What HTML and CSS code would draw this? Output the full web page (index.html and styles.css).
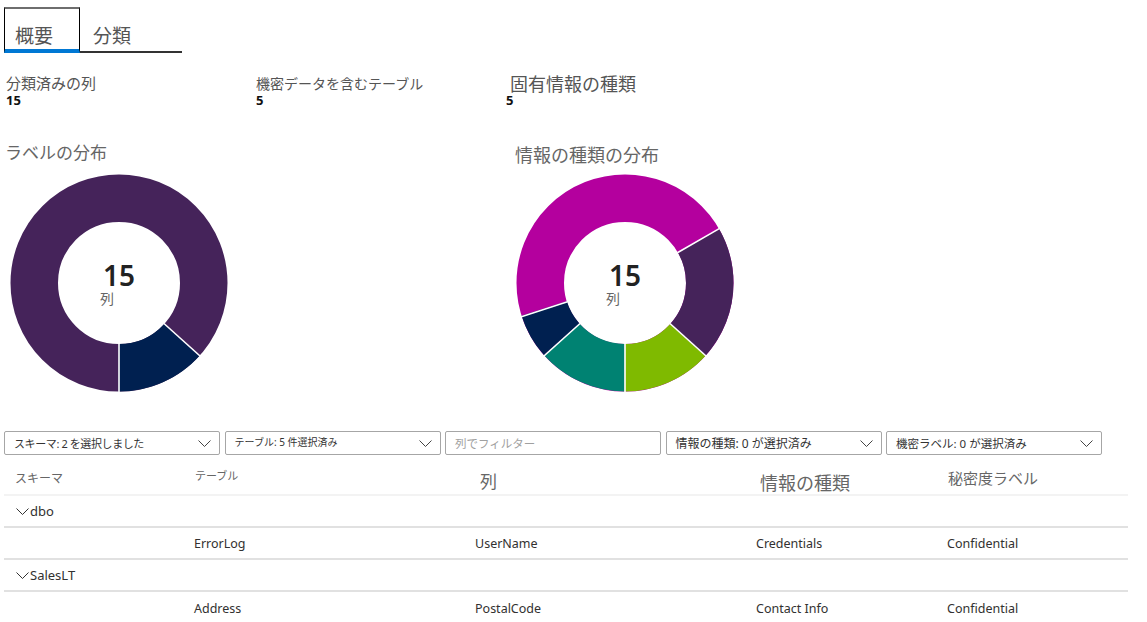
FILE: index.html
```html
<!DOCTYPE html>
<html lang="ja">
<head>
<meta charset="utf-8">
<title>データの分類</title>
<link rel="stylesheet" href="styles.css">
</head>
<body>
<div class="page">
  <nav class="tabs">
    <div class="tab tab-active">概要</div>
    <div class="tab tab-plain">分類</div>
  </nav>

  <section class="stats">
    <div class="stat">
      <div class="stat-title stat-title-a">分類済みの列</div>
      <div class="stat-value">15</div>
    </div>
    <div class="stat">
      <div class="stat-title stat-title-b">機密データを含むテーブル</div>
      <div class="stat-value">5</div>
    </div>
    <div class="stat">
      <div class="stat-title stat-title-lg">固有情報の種類</div>
      <div class="stat-value">5</div>
    </div>
  </section>

  <section class="charts">
    <div class="chart">
      <div class="chart-title chart-title-a">ラベルの分布</div>
      <div class="donut-wrap">
        <svg class="donut" width="218" height="218" viewBox="0 0 218 218">
          <circle cx="109" cy="109" r="84.75" fill="none" stroke="#45235a" stroke-width="47.5"/>
          <circle cx="109" cy="109" r="84.75" fill="none" stroke="#002050" stroke-width="47.5" stroke-dasharray="71 532.5" stroke-dashoffset="-195.25" transform="rotate(-90 109 109)"/>
          <g stroke="#ffffff" stroke-width="1.6">
            <line x1="153.96" y1="149.48" x2="190.59" y2="182.47"/>
            <line x1="109" y1="169.5" x2="109" y2="218.8"/>
          </g>
        </svg>
        <div class="donut-num">15</div>
        <div class="donut-unit">列</div>
      </div>
    </div>
    <div class="chart">
      <div class="chart-title chart-title-b">情報の種類の分布</div>
      <div class="donut-wrap">
        <svg class="donut" width="218" height="218" viewBox="0 0 218 218">
          <circle cx="109" cy="109" r="84.75" fill="none" stroke="#b4009e" stroke-width="47.5"/>
          <circle cx="109" cy="109" r="84.75" fill="none" stroke="#45235a" stroke-width="47.5" stroke-dasharray="106.5 532.5" stroke-dashoffset="-88.75" transform="rotate(-90 109 109)"/>
          <circle cx="109" cy="109" r="84.75" fill="none" stroke="#7fba00" stroke-width="47.5" stroke-dasharray="71 532.5" stroke-dashoffset="-195.25" transform="rotate(-90 109 109)"/>
          <circle cx="109" cy="109" r="84.75" fill="none" stroke="#008272" stroke-width="47.5" stroke-dasharray="71 532.5" stroke-dashoffset="-266.25" transform="rotate(-90 109 109)"/>
          <circle cx="109" cy="109" r="84.75" fill="none" stroke="#002050" stroke-width="47.5" stroke-dasharray="35.5 532.5" stroke-dashoffset="-337.25" transform="rotate(-90 109 109)"/>
          <g stroke="#ffffff" stroke-width="1.6">
            <line x1="161.39" y1="78.75" x2="204.09" y2="54.1"/>
            <line x1="153.96" y1="149.48" x2="190.59" y2="182.47"/>
            <line x1="109" y1="169.5" x2="109" y2="218.8"/>
            <line x1="64.04" y1="149.48" x2="27.41" y2="182.47"/>
            <line x1="51.46" y1="127.69" x2="4.57" y2="142.93"/>
          </g>
        </svg>
        <div class="donut-num">15</div>
        <div class="donut-unit">列</div>
      </div>
    </div>
  </section>

  <section class="filters">
    <div class="filter">
      <span class="filter-text fs-a">スキーマ: 2 を選択しました</span>
      <svg class="chev" width="13" height="7" viewBox="0 0 13 7"><polyline points="0.5,0.5 6.5,6.5 12.5,0.5" fill="none" stroke="#444" stroke-width="1"/></svg>
    </div>
    <div class="filter">
      <span class="filter-text fs-b">テーブル: 5 件選択済み</span>
      <svg class="chev" width="13" height="7" viewBox="0 0 13 7"><polyline points="0.5,0.5 6.5,6.5 12.5,0.5" fill="none" stroke="#444" stroke-width="1"/></svg>
    </div>
    <div class="filter">
      <span class="filter-text fs-c placeholder">列でフィルター</span>
    </div>
    <div class="filter">
      <span class="filter-text fs-d">情報の種類: 0 が選択済み</span>
      <svg class="chev" width="13" height="7" viewBox="0 0 13 7"><polyline points="0.5,0.5 6.5,6.5 12.5,0.5" fill="none" stroke="#444" stroke-width="1"/></svg>
    </div>
    <div class="filter">
      <span class="filter-text fs-e">機密ラベル: 0 が選択済み</span>
      <svg class="chev" width="13" height="7" viewBox="0 0 13 7"><polyline points="0.5,0.5 6.5,6.5 12.5,0.5" fill="none" stroke="#444" stroke-width="1"/></svg>
    </div>
  </section>

  <section class="grid">
    <div class="row row-head">
      <div class="hcell h-schema">スキーマ</div>
      <div class="hcell h-table">テーブル</div>
      <div class="hcell h-col">列</div>
      <div class="hcell h-type">情報の種類</div>
      <div class="hcell h-label">秘密度ラベル</div>
    </div>
    <div class="row row-group">
      <div class="gcell">
        <svg class="gchev" width="13" height="7" viewBox="0 0 13 7"><polyline points="0.5,0.5 6.5,6.5 12.5,0.5" fill="none" stroke="#333" stroke-width="1"/></svg>
        <span>dbo</span>
      </div>
    </div>
    <div class="row row-data">
      <div class="cell"></div>
      <div class="cell">ErrorLog</div>
      <div class="cell">UserName</div>
      <div class="cell">Credentials</div>
      <div class="cell">Confidential</div>
    </div>
    <div class="row row-group">
      <div class="gcell">
        <svg class="gchev" width="13" height="7" viewBox="0 0 13 7"><polyline points="0.5,0.5 6.5,6.5 12.5,0.5" fill="none" stroke="#333" stroke-width="1"/></svg>
        <span>SalesLT</span>
      </div>
    </div>
    <div class="row row-data row-last">
      <div class="cell"></div>
      <div class="cell">Address</div>
      <div class="cell">PostalCode</div>
      <div class="cell">Contact Info</div>
      <div class="cell">Confidential</div>
    </div>
  </section>
</div>
</body>
</html>
```

FILE: styles.css
```css
* {
  box-sizing: border-box;
}

html, body {
  margin: 0;
  padding: 0;
  background: #ffffff;
}

body {
  font-family: "Noto Sans", "Noto Sans CJK JP", sans-serif;
  color: #323130;
  overflow: hidden;
}

.page {
  width: 1147px;
}

/* Tabs */
.tabs {
  display: flex;
  margin: 7px 0 0 4px;
  height: 46px;
}

.tab {
  height: 46px;
  font-family: "Noto Sans CJK JP", sans-serif;
  font-size: 19px;
  line-height: 24px;
  padding-top: 14px;
  color: #555555;
  border-top: 2px solid transparent;
}

.tab-active {
  width: 76px;
  padding-left: 10px;
  padding-bottom: 2px;
  border-top: 2px solid #6e6e6e;
  border-left: 1px solid #000000;
  border-right: 1px solid #000000;
  border-bottom: 4px solid #0078d4;
}

.tab-plain {
  width: 102px;
  padding-left: 13px;
  padding-bottom: 4px;
  border-bottom: 2px solid #333333;
}

/* Stats */
.stats {
  display: grid;
  grid-template-columns: 250px 250px auto;
  margin-top: 20px;
  padding-left: 6px;
}

.stat-title {
  font-family: "Noto Sans CJK JP", sans-serif;
  line-height: 20px;
  height: 20px;
  color: #555555;
  white-space: nowrap;
}

.stat-title-a {
  font-size: 15px;
}

.stat-title-b {
  font-size: 14px;
}

.stat-title-lg {
  font-size: 18px;
  line-height: 17px;
  margin-left: 4px;
  padding-top: 2px;
}

.stat-value {
  font-size: 13px;
  line-height: 14px;
  font-weight: 700;
  color: #111111;
}

/* Charts */
.charts {
  display: grid;
  grid-template-columns: 506px auto;
  margin-top: 33px;
  padding-left: 4px;
}

.chart-title {
  font-family: "Noto Sans CJK JP", sans-serif;
  height: 24px;
  color: #666666;
  white-space: nowrap;
}

.chart-title-a {
  font-size: 17px;
  line-height: 24px;
  margin-left: 1px;
}

.chart-title-b {
  font-size: 18px;
  line-height: 22px;
  padding-top: 3px;
  margin-left: 5px;
}

.donut-wrap {
  position: relative;
  width: 218px;
  height: 218px;
  margin-top: 10px;
  margin-left: 6px;
}

.donut {
  display: block;
}

.donut-num {
  position: absolute;
  top: 90px;
  left: 0;
  right: 0;
  text-align: center;
  font-family: "Noto Sans", sans-serif;
  font-size: 28px;
  line-height: 22px;
  font-weight: 600;
  color: #222222;
}

.donut-unit {
  position: absolute;
  top: 117px;
  left: 90px;
  font-family: "Noto Sans CJK JP", sans-serif;
  font-size: 14px;
  line-height: 15px;
  color: #666666;
}

/* Filters */
.filters {
  display: grid;
  grid-template-columns: repeat(5, 216px);
  column-gap: 4.5px;
  margin-top: 39px;
  padding-left: 4px;
}

.filter {
  height: 24px;
  border: 1px solid #a6a6a6;
  border-radius: 2px;
  display: flex;
  align-items: center;
  justify-content: space-between;
  padding: 0 8px 0 9px;
}

.filter-text {
  font-family: "Noto Sans", "Noto Sans CJK JP", sans-serif;
  color: #333333;
  white-space: nowrap;
}

.fs-a { font-size: 11px; letter-spacing: -0.4px; }
.fs-b { font-size: 10px; margin-top: -4px; }
.fs-c { font-size: 11.5px; }
.fs-d { font-size: 12px; }
.fs-e { font-size: 11.5px; }

.placeholder {
  color: #a0a0a0;
}

.chev {
  display: block;
  margin-top: 1px;
}

/* Table */
.grid {
  margin-top: 4px;
  margin-left: 4px;
  width: 1124px;
}

.row {
  display: grid;
  grid-template-columns: 190px 281px 281px 191px 1fr;
  border-bottom: 2px solid #e1e1e1;
}

.row-head {
  height: 37px;
  align-items: start;
  border-bottom-color: #f3f3f3;
}

.hcell {
  font-family: "Noto Sans CJK JP", sans-serif;
  color: #666666;
  white-space: nowrap;
}

.h-schema {
  font-size: 12px;
  line-height: 16px;
  padding: 10.5px 0 0 11px;
}

.h-table {
  font-size: 11px;
  line-height: 14px;
  padding: 9px 0 0 1px;
}

.h-col {
  font-size: 17px;
  line-height: 20px;
  padding: 12px 0 0 5px;
}

.h-type {
  font-size: 18px;
  line-height: 22px;
  padding: 11.5px 0 0 4px;
}

.h-label {
  font-size: 15px;
  line-height: 18px;
  padding: 9.5px 0 0 1px;
}

.row-group {
  height: 32px;
  align-items: center;
}

.gcell {
  grid-column: 1 / -1;
  display: flex;
  align-items: center;
  gap: 1px;
  padding-left: 12px;
  font-size: 13px;
  color: #323130;
}

.gchev {
  display: block;
  margin-top: 1px;
}

.row-data {
  height: 32px;
  align-items: center;
}

.row-last {
  border-bottom: none;
}

.cell {
  font-size: 12.5px;
  color: #323130;
  white-space: nowrap;
}
```
